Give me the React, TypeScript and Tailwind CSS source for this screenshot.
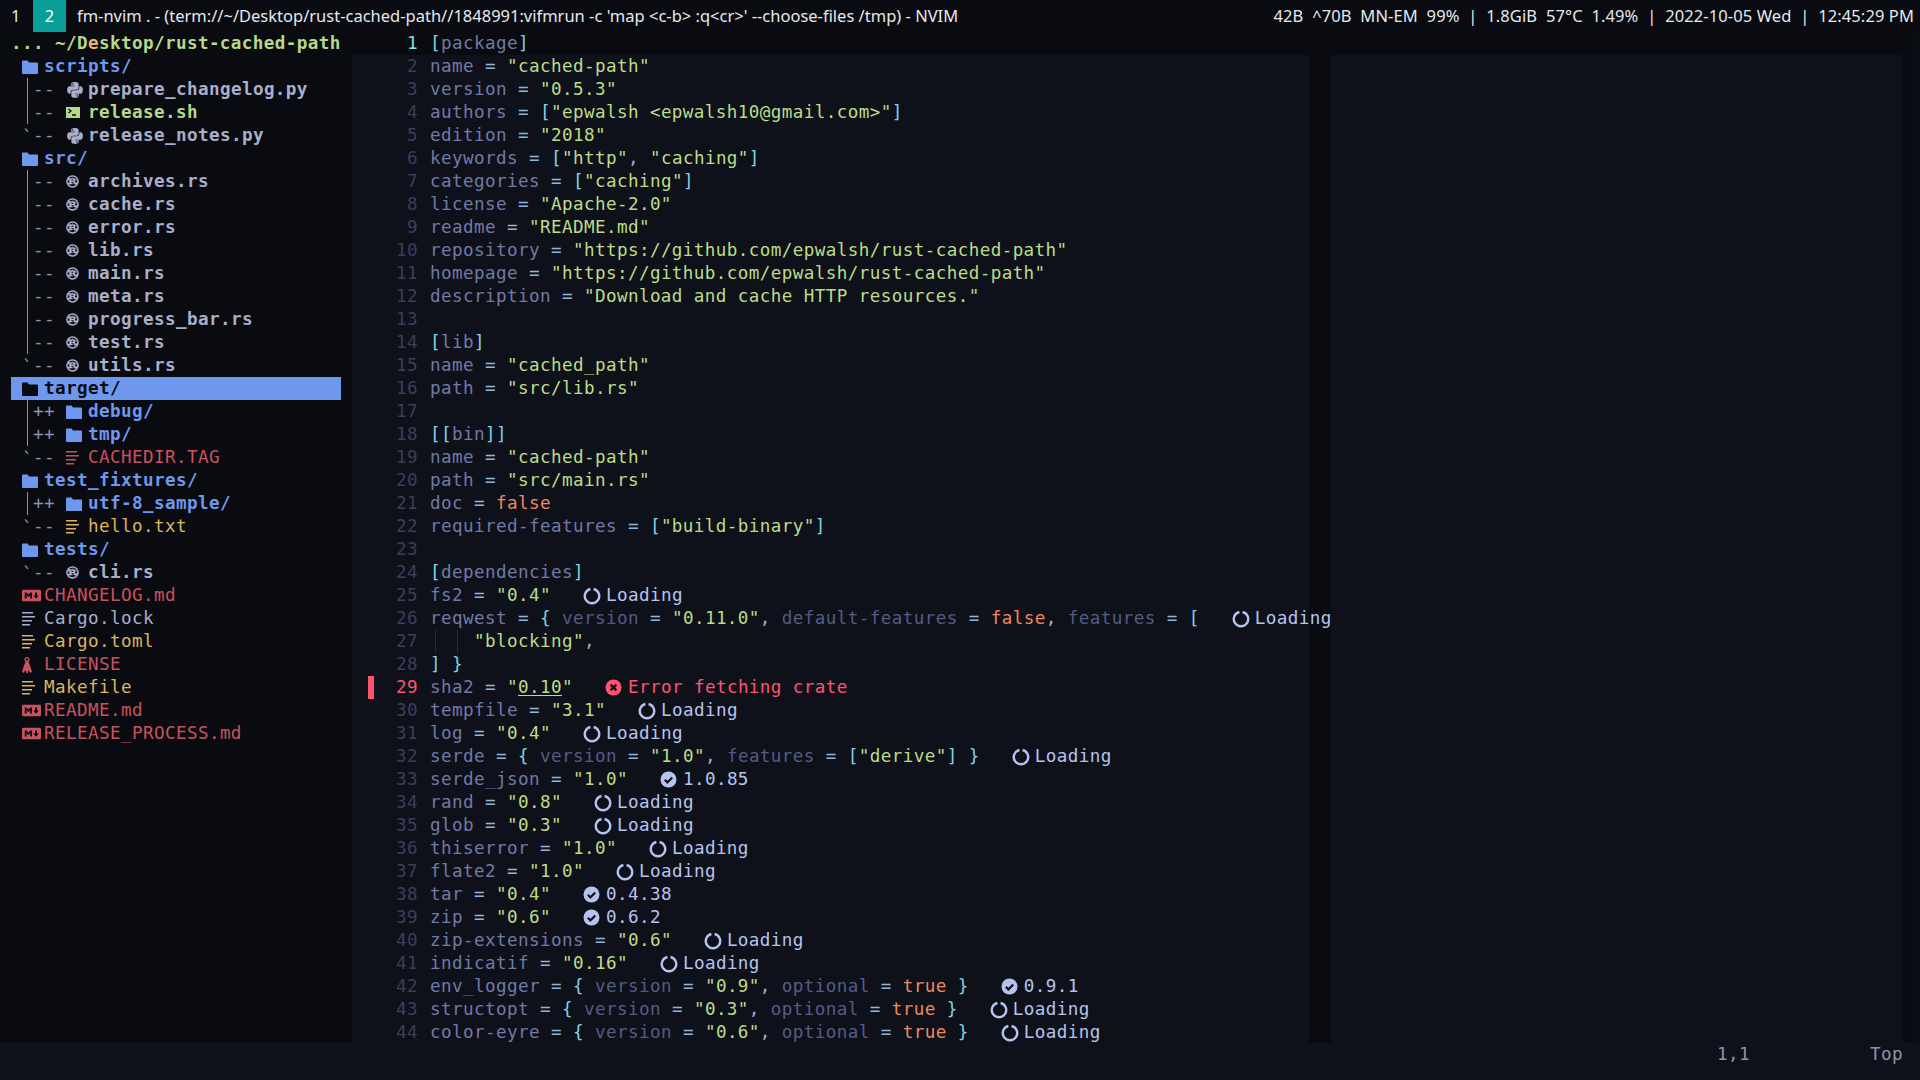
import React from 'react';
import { FaPython, FaRust, FaMarkdown } from 'react-icons/fa';

type Icon = 'folder' | 'python' | 'shell' | 'rust' | 'lines' | 'markdown' | 'key';
type Guide = 'pipe' | 'last' | null;
type TreeRow = { name: string; icon: Icon; color: string; bold?: boolean; guide?: Guide; mark?: string; selected?: boolean };

const BLUE = 'text-[#6e98ee]';
const GREY = 'text-[#a9afcb]';
const RED = 'text-[#c9525f]';
const YELLOW = 'text-[#dcb45f]';

const TREE: TreeRow[] = [
    { name: 'scripts/', icon: 'folder', color: BLUE, bold: true },
    { name: 'prepare_changelog.py', icon: 'python', color: GREY, bold: true, guide: 'pipe', mark: '--' },
    { name: 'release.sh', icon: 'shell', color: 'text-[#b5d98a]', bold: true, guide: 'pipe', mark: '--' },
    { name: 'release_notes.py', icon: 'python', color: GREY, bold: true, guide: 'last', mark: '--' },
    { name: 'src/', icon: 'folder', color: BLUE, bold: true },
    { name: 'archives.rs', icon: 'rust', color: GREY, bold: true, guide: 'pipe', mark: '--' },
    { name: 'cache.rs', icon: 'rust', color: GREY, bold: true, guide: 'pipe', mark: '--' },
    { name: 'error.rs', icon: 'rust', color: GREY, bold: true, guide: 'pipe', mark: '--' },
    { name: 'lib.rs', icon: 'rust', color: GREY, bold: true, guide: 'pipe', mark: '--' },
    { name: 'main.rs', icon: 'rust', color: GREY, bold: true, guide: 'pipe', mark: '--' },
    { name: 'meta.rs', icon: 'rust', color: GREY, bold: true, guide: 'pipe', mark: '--' },
    { name: 'progress_bar.rs', icon: 'rust', color: GREY, bold: true, guide: 'pipe', mark: '--' },
    { name: 'test.rs', icon: 'rust', color: GREY, bold: true, guide: 'pipe', mark: '--' },
    { name: 'utils.rs', icon: 'rust', color: GREY, bold: true, guide: 'last', mark: '--' },
    { name: 'target/', icon: 'folder', color: 'text-[#090b10]', bold: true, selected: true },
    { name: 'debug/', icon: 'folder', color: BLUE, bold: true, guide: 'pipe', mark: '++' },
    { name: 'tmp/', icon: 'folder', color: BLUE, bold: true, guide: 'pipe', mark: '++' },
    { name: 'CACHEDIR.TAG', icon: 'lines', color: RED, guide: 'last', mark: '--' },
    { name: 'test_fixtures/', icon: 'folder', color: BLUE, bold: true },
    { name: 'utf-8_sample/', icon: 'folder', color: BLUE, bold: true, guide: 'pipe', mark: '++' },
    { name: 'hello.txt', icon: 'lines', color: YELLOW, guide: 'last', mark: '--' },
    { name: 'tests/', icon: 'folder', color: BLUE, bold: true },
    { name: 'cli.rs', icon: 'rust', color: GREY, bold: true, guide: 'last', mark: '--' },
    { name: 'CHANGELOG.md', icon: 'markdown', color: RED },
    { name: 'Cargo.lock', icon: 'lines', color: GREY },
    { name: 'Cargo.toml', icon: 'lines', color: YELLOW },
    { name: 'LICENSE', icon: 'key', color: RED },
    { name: 'Makefile', icon: 'lines', color: YELLOW },
    { name: 'README.md', icon: 'markdown', color: RED },
    { name: 'RELEASE_PROCESS.md', icon: 'markdown', color: RED },
];

type Status = { kind: 'loading' | 'ok' | 'error'; text: string };
type CodeLine = { code: string; status?: Status };

const loading: Status = { kind: 'loading', text: 'Loading' };

const CODE: CodeLine[] = [
    { code: '[package]' },
    { code: 'name = "cached-path"' },
    { code: 'version = "0.5.3"' },
    { code: 'authors = ["epwalsh <epwalsh10@gmail.com>"]' },
    { code: 'edition = "2018"' },
    { code: 'keywords = ["http", "caching"]' },
    { code: 'categories = ["caching"]' },
    { code: 'license = "Apache-2.0"' },
    { code: 'readme = "README.md"' },
    { code: 'repository = "https://github.com/epwalsh/rust-cached-path"' },
    { code: 'homepage = "https://github.com/epwalsh/rust-cached-path"' },
    { code: 'description = "Download and cache HTTP resources."' },
    { code: '' },
    { code: '[lib]' },
    { code: 'name = "cached_path"' },
    { code: 'path = "src/lib.rs"' },
    { code: '' },
    { code: '[[bin]]' },
    { code: 'name = "cached-path"' },
    { code: 'path = "src/main.rs"' },
    { code: 'doc = false' },
    { code: 'required-features = ["build-binary"]' },
    { code: '' },
    { code: '[dependencies]' },
    { code: 'fs2 = "0.4"', status: loading },
    { code: 'reqwest = { version = "0.11.0", default-features = false, features = [', status: loading },
    { code: '    "blocking",' },
    { code: '] }' },
    { code: 'sha2 = "0.10"', status: { kind: 'error', text: 'Error fetching crate' } },
    { code: 'tempfile = "3.1"', status: loading },
    { code: 'log = "0.4"', status: loading },
    { code: 'serde = { version = "1.0", features = ["derive"] }', status: loading },
    { code: 'serde_json = "1.0"', status: { kind: 'ok', text: '1.0.85' } },
    { code: 'rand = "0.8"', status: loading },
    { code: 'glob = "0.3"', status: loading },
    { code: 'thiserror = "1.0"', status: loading },
    { code: 'flate2 = "1.0"', status: loading },
    { code: 'tar = "0.4"', status: { kind: 'ok', text: '0.4.38' } },
    { code: 'zip = "0.6"', status: { kind: 'ok', text: '0.6.2' } },
    { code: 'zip-extensions = "0.6"', status: loading },
    { code: 'indicatif = "0.16"', status: loading },
    { code: 'env_logger = { version = "0.9", optional = true }', status: { kind: 'ok', text: '0.9.1' } },
    { code: 'structopt = { version = "0.3", optional = true }', status: loading },
    { code: 'color-eyre = { version = "0.6", optional = true }', status: loading },
];

const TreeIcon = ({ icon, className }: { icon: Icon; className: string }) => {
    switch (icon) {
        case 'folder':
            return (
                <svg width="16" height="14" viewBox="0 0 16 14" className={className} fill="currentColor">
                    <path d="M0 1.5V13a1 1 0 0 0 1 1h14a1 1 0 0 0 1-1V3.5a1 1 0 0 0-1-1H7L5.5 .5H1a1 1 0 0 0-1 1z" />
                </svg>
            );
        case 'python':
            return <FaPython size={18} className={className} />;
        case 'rust':
            return <FaRust size={13} className={className} />;
        case 'markdown':
            return <FaMarkdown size={19} className={className} />;
        case 'shell':
            return (
                <svg width="14" height="11" viewBox="0 0 14 11" className="text-[#b5d98a]">
                    <rect width="14" height="11" fill="currentColor" />
                    <path d="M2.5 2l2.5 2-2.5 2M6 8h4" stroke="#090b10" strokeWidth="1.3" fill="none" />
                </svg>
            );
        case 'key':
            return (
                <svg width="10" height="16" viewBox="0 0 10 16" className={className} fill="currentColor">
                    <path d="M5 0a2.6 2.6 0 0 0-2.6 2.6c0 .9.4 1.6 1 2.1L0 14.5l1.6 1.5 2-3 .6 3h1.6l.6-3 2 3L10 14.5 6.6 4.7c.6-.5 1-1.2 1-2.1A2.6 2.6 0 0 0 5 0zm0 1.3a1.2 1.2 0 1 1 0 2.4 1.2 1.2 0 0 1 0-2.4z" />
                </svg>
            );
        default:
            return (
                <svg width="13" height="14" viewBox="0 0 13 14" className={className} fill="currentColor">
                    <path d="M0 0h11v1.6H0zM0 4h13v1.6H0zM0 8h10v1.6H0zM0 12h8v1.6H0z" />
                </svg>
            );
    }
};

const TreeLine = ({ row }: { row: TreeRow }) => (
    <div className={`h-[23px] w-[330px] ml-[11px] pl-[11px] flex items-center whitespace-pre ${row.selected ? 'bg-[#6e98ee]' : ''}`}>
        {row.guide && (
            <>
                <span className="w-[11px] h-full flex justify-center text-[#8d93aa]">
                    {row.guide === 'pipe' ? <span className="w-px h-full bg-[#8d93aa]" /> : '`'}
                </span>
                <span className="w-[33px] text-[#8d93aa]">{row.mark}</span>
            </>
        )}
        <span className="w-[22px] flex items-center">
            <TreeIcon icon={row.icon} className={row.selected ? 'text-[#090b10]' : row.color} />
        </span>
        <span className={`${row.color} ${row.bold ? 'font-bold' : ''}`}>{row.name}</span>
    </div>
);

// kleine TOML-Färbung, reicht für diese Datei
const tokenColor = (tok: string, inBrace: boolean) => {
    if (tok.startsWith('"')) return 'text-[#bbdd88]';
    if (tok === 'true' || tok === 'false') return 'text-[#f0875f]';
    if (/^[[\]{}]+$/.test(tok)) return 'text-[#7fd3e6]';
    if (tok === '=') return 'text-[#8fb6d8]';
    if (tok === ',') return 'text-[#a6accd]';
    return inBrace ? 'text-[#525c85]' : 'text-[#6f7aa6]';
};

const Code = ({ code }: { code: string }) => {
    if (code.startsWith('sha2')) {
        return (
            <>
                <span className="text-[#6f7aa6]">sha2</span>
                <span className="text-[#8fb6d8]"> = </span>
                <span className="text-[#bbdd88]">"<span className="underline underline-offset-2">0.10</span>"</span>
            </>
        );
    }
    const parts = code.match(/"[^"]*"|[[\]{}]+|=|,|\s+|[^\s=,[\]{}"]+/g) || [];
    let inBrace = false;
    return (
        <>
            {parts.map((tok, i) => {
                if (tok === '{') inBrace = true;
                if (/^\s+$/.test(tok)) return <span key={i}>{tok}</span>;
                return (
                    <span key={i} className={tokenColor(tok, inBrace)}>
                        {tok}
                    </span>
                );
            })}
        </>
    );
};

const StatusIcon = ({ kind }: { kind: Status['kind'] }) => {
    if (kind === 'loading') {
        return (
            <svg width="18" height="18" viewBox="0 0 18 18" fill="none" stroke="#b4c4ee" strokeWidth="2.4">
                <path d="M10.6 2A7.2 7.2 0 1 1 7.4 2" />
            </svg>
        );
    }
    if (kind === 'ok') {
        return (
            <svg width="17" height="17" viewBox="0 0 17 17">
                <circle cx="8.5" cy="8.5" r="8" fill="#b4c4ee" />
                <path d="M4.8 8.8l2.6 2.6 4.8-5" stroke="#0f111a" strokeWidth="2.2" fill="none" />
            </svg>
        );
    }
    return (
        <svg width="17" height="17" viewBox="0 0 17 17">
            <circle cx="8.5" cy="8.5" r="8" fill="#ff5370" />
            <path d="M5.6 5.6l5.8 5.8M11.4 5.6l-5.8 5.8" stroke="#0f111a" strokeWidth="2.2" fill="none" />
        </svg>
    );
};

const EditorLine = ({ line, n }: { line: CodeLine; n: number }) => {
    const isError = line.status?.kind === 'error';
    const isGuide = n === 27;
    return (
        <div className={`h-[23px] flex items-center whitespace-pre ${n === 1 ? 'bg-[#090b10]' : ''}`}>
            <span className="w-[22px] h-full flex justify-end">
                {isError && <span className="w-[6px] h-full bg-[#ff5370]" />}
            </span>
            <span className={`w-[44px] text-right ${n === 1 ? 'text-[#8be0dc]' : isError ? 'text-[#ff5370]' : 'text-[#3a3f58]'}`}>{n}</span>
            <span className="w-[12px]" />
            {isGuide ? (
                <>
                    <span className="w-[22px] h-full flex justify-center"><span className="w-px h-full bg-[#262a3a] -ml-[1px] mr-[10px]" /></span>
                    <span className="w-[22px] h-full flex justify-center"><span className="w-px h-full bg-[#262a3a] -ml-[1px] mr-[10px]" /></span>
                    <Code code={line.code.trim()} />
                </>
            ) : (
                <Code code={line.code} />
            )}
            {line.status && (
                <>
                    <span className="w-[33px]" />
                    <span className="w-[22px] -ml-[1px] mr-[1px] flex items-center">
                        <StatusIcon kind={line.status.kind} />
                    </span>
                    <span className={isError ? 'text-[#ff5370]' : 'text-[#b4c4ee]'}>{line.status.text}</span>
                </>
            )}
        </div>
    );
};

const App: React.FC = () => {
    return (
        <div className="w-[1920px] h-[1080px] overflow-hidden flex flex-col bg-[#0f111a] text-[17.6px] tracking-[0.4px] font-['DejaVu_Sans_Mono',monospace]">
            {/* Top bar */}
            <div className="h-[32px] flex-shrink-0 bg-[#090b10] flex items-center justify-between whitespace-pre text-[#e6e8ee] text-[16.5px] tracking-normal font-['Noto_Sans',sans-serif]">
                <div className="flex items-center h-full">
                    <span className="w-[33px] pl-[11px]">1</span>
                    <span className="w-[33px] h-full flex items-center justify-center bg-[#0a9e98] text-white">2</span>
                    <span className="ml-[11px]">fm-nvim . - (term://~/Desktop/rust-cached-path//1848991:vifmrun -c 'map &lt;c-b&gt; :q&lt;cr&gt;' --choose-files /tmp) - NVIM</span>
                </div>
                <span className="pr-[6px] tracking-[0.1px]">42B  ^70B  MN-EM  99%  |  1.8GiB  57°C  1.49%  |  2022-10-05 Wed  |  12:45:29 PM</span>
            </div>

            <div className="h-[1011px] flex-shrink-0 flex">
                {/* File tree */}
                <div className="w-[352px] flex-shrink-0 bg-[#090b10]">
                    <div className="h-[23px] pl-[11px] flex items-center whitespace-pre font-bold text-[#b5d98a]">
                        ... ~/D<span className="text-[#e8b56a]">e</span>sktop/rust-cached-path
                    </div>
                    {TREE.map((row) => (
                        <TreeLine key={row.name} row={row} />
                    ))}
                </div>

                {/* Editor */}
                <div className="flex-1 relative overflow-hidden">
                    <div className="absolute top-0 bottom-0 left-[957px] w-[22px] bg-[#090b10]" />
                    <div className="relative">
                        {CODE.map((line, i) => (
                            <EditorLine key={i} line={line} n={i + 1} />
                        ))}
                    </div>
                </div>

                <div className="w-[17px] flex-shrink-0 bg-[#090b10] flex justify-end">
                    <div className="w-[7px] h-full mt-[1px] bg-[#0c0e15]" />
                </div>
            </div>

            {/* Status line */}
            <div className="h-[23px] flex justify-end items-center whitespace-pre text-[#8f93a8] pr-[17px]">
                <span className="w-[153px]">1,1</span>
                <span>Top</span>
            </div>
        </div>
    );
};

export default App;
